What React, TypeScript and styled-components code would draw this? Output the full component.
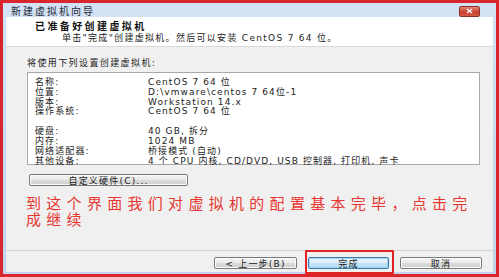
import React from "react"
import styled, { createGlobalStyle } from "styled-components"

const GlobalStyle = createGlobalStyle`
	html, body {
		margin: 0;
		padding: 0;
		background: #ffffff;
	}
	body {
		font-family: "DejaVu Sans", "Noto Sans CJK SC", sans-serif;
		color: #1c1c1c;
	}
`

const Window = styled.div`
	box-sizing: border-box;
	width: 499px;
	height: 277px;
	border: 3px solid #d8262c;
	background: linear-gradient(#d3e2f4, #c3d3ea);
	display: flex;
	flex-direction: column;
`

const TitleBar = styled.div`
	height: 14px;
	display: flex;
	align-items: center;
	justify-content: space-between;
	padding: 0 16px 0 8px;
	font-size: 10px;
	letter-spacing: 2px;
	color: #1e2a38;
	font-family: "Noto Sans CJK SC", sans-serif;
`

const CloseButton = styled.div`
	width: 19px;
	height: 9px;
	margin-top: 2px;
	border: 1px solid #8c3328;
	border-radius: 2px;
	background: linear-gradient(#e48a7c, #c9412f 55%, #d35a46);
	display: flex;
	align-items: center;
	justify-content: center;

	svg {
		width: 7px;
		height: 6px;
	}
`

const Client = styled.div`
	flex: 1;
	margin: 0 3px 2px 3px;
	background: #f0f0f0;
	display: flex;
	flex-direction: column;
`

const Header = styled.div`
	height: 30px;
	box-sizing: border-box;
	background: #ffffff;
	border-bottom: 1px solid #d9d9d9;
	padding: 2px 0 0 29px;
`

const HeaderTitle = styled.div`
	font-family: "Noto Sans CJK SC", sans-serif;
	font-weight: bold;
	font-size: 10px;
	line-height: 13px;
	letter-spacing: 2.4px;
	color: #111;
`

const HeaderSub = styled.div`
	font-size: 9px;
	line-height: 12px;
	letter-spacing: 1.3px;
	padding-left: 27px;
	color: #222;
`

const Body = styled.div`
	flex: 1;
	padding: 10px 13px 0 21px;
	display: flex;
	flex-direction: column;
	align-items: flex-start;
`

const Caption = styled.div`
	font-size: 9px;
	line-height: 12px;
	letter-spacing: 1.4px;
`

const ListBox = styled.div`
	align-self: stretch;
	margin-top: 3px;
	height: 93px;
	box-sizing: border-box;
	background: #ffffff;
	border: 1px solid #a9a9a9;
	padding: 5px 0 0 7px;
`

const Row = styled.div<{ $gap?: boolean }>`
	display: grid;
	grid-template-columns: 113px 1fr;
	font-size: 9px;
	line-height: 9.8px;
	letter-spacing: 1.1px;
	margin-top: ${p => (p.$gap ? "10px" : "0")};
	white-space: nowrap;
`

const Button = styled.div<{ $width: number; $focus?: boolean }>`
	box-sizing: border-box;
	width: ${p => p.$width}px;
	height: 12px;
	border: 1px solid ${p => (p.$focus ? "#3d7bad" : "#7a7a7a")};
	border-radius: 2px;
	background: ${p =>
		p.$focus
			? "linear-gradient(#ecf6fd 0%, #dcedfa 50%, #c4e2f6 51%, #b8dbf3 100%)"
			: "linear-gradient(#f4f4f4 0%, #e9e9e9 50%, #dcdcdc 51%, #cfcfcf 100%)"};
	box-shadow: inset 0 0 0 1px ${p => (p.$focus ? "#9fd6f5" : "#fbfbfb")};
	display: flex;
	align-items: center;
	justify-content: center;
	font-size: 9px;
	letter-spacing: 1.2px;
	color: #1a1a1a;
	position: relative;
`

const CustomButton = styled(Button)`
	margin: 9px 0 0 2px;
`

const Highlight = styled.div`
	position: absolute;
	top: -8px;
	left: -4px;
	right: -6px;
	bottom: -6px;
	border: 2px solid #e02424;
	border-radius: 1px;
`

const Note = styled.div`
	margin-top: 9px;
	width: 455px;
	margin-left: -1px;
	font-family: "Noto Sans CJK SC", sans-serif;
	font-size: 15px;
	line-height: 16px;
	letter-spacing: 5.3px;
	color: #e8352f;
`

const Footer = styled.div`
	height: 22px;
	box-sizing: border-box;
	border-top: 1px solid #d5d5d5;
	padding: 6px 11px 0 0;
	display: flex;
	justify-content: flex-end;
	gap: 11px;
`

const settings: [string, string][] = [
	["名称:", "CentOS 7 64 位"],
	["位置:", "D:\\vmware\\centos 7 64位-1"],
	["版本:", "Workstation 14.x"],
	["操作系统:", "CentOS 7 64 位"]
]

const hardware: [string, string][] = [
	["硬盘:", "40 GB, 拆分"],
	["内存:", "1024 MB"],
	["网络适配器:", "桥接模式 (自动)"],
	["其他设备:", "4 个 CPU 内核, CD/DVD, USB 控制器, 打印机, 声卡"]
]

const App = () => {
	return (
		<>
			<GlobalStyle />
			<Window>
				<TitleBar>
					新建虚拟机向导
					<CloseButton>
						<svg viewBox="0 0 7 6">
							<path d="M1 1 L6 5 M6 1 L1 5" stroke="#fff" strokeWidth="1.4" />
						</svg>
					</CloseButton>
				</TitleBar>
				<Client>
					<Header>
						<HeaderTitle>已准备好创建虚拟机</HeaderTitle>
						<HeaderSub>单击"完成"创建虚拟机。然后可以安装 CentOS 7 64 位。</HeaderSub>
					</Header>
					<Body>
						<Caption>将使用下列设置创建虚拟机:</Caption>
						<ListBox>
							{settings.map(([k, v]) => (
								<Row key={k}>
									<span>{k}</span>
									<span>{v}</span>
								</Row>
							))}
							{hardware.map(([k, v], i) => (
								<Row key={k} $gap={i === 0}>
									<span>{k}</span>
									<span>{v}</span>
								</Row>
							))}
						</ListBox>
						<CustomButton $width={159}>自定义硬件(C)...</CustomButton>
						<Note>到这个界面我们对虚拟机的配置基本完毕，点击完成继续</Note>
					</Body>
					<Footer>
						<Button $width={83}>&lt; 上一步(B)</Button>
						<Button $width={81} $focus>
							完成
							<Highlight />
						</Button>
						<Button $width={82}>取消</Button>
					</Footer>
				</Client>
			</Window>
		</>
	)
}

export default App
